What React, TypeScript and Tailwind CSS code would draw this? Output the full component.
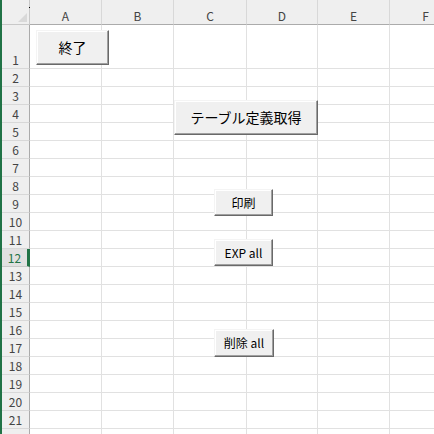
import React from 'react'

const cols = ['A', 'B', 'C', 'D', 'E', 'F']
const rows = Array.from({ length: 22 }, (_, i) => i + 1)

const font = { fontFamily: '"Noto Sans CJK JP", "Noto Sans", sans-serif' }

function XlButton({ label, className }: { label: string; className: string }) {
  return (
    <div
      className={`absolute flex items-center justify-center border border-t-[#f4f4f4] border-l-[#f4f4f4] border-r-[#696969] border-b-[#696969] bg-[#f0f0f0] text-black shadow-[inset_-1px_-1px_0_#a0a0a0,inset_1px_1px_0_#ffffff] ${className}`}
    >
      {label}
    </div>
  )
}

export default function App() {
  return (
    <div className="relative h-[434px] w-[434px] overflow-hidden bg-white" style={font}>
      <div className="flex h-full">
        {/* green window edge */}
        <div className="h-full w-[2px] shrink-0 bg-[#217346]" />
        <div className="grid h-full grid-cols-[28px_72px_72px_73px_71px_72px_72px] grid-rows-[25px_44px_repeat(21,18px)]">
          {/* corner */}
          <div className="relative border-r border-b border-r-[#c8c8c8] border-b-[#c8c8c8] bg-[#efefef]">
            <div className="absolute left-[16px] top-[13px] h-0 w-0 border-l-[9px] border-b-[9px] border-l-transparent border-b-[#d9d9d9]" />
            <div className="absolute left-[27px] top-[7px] h-px w-px bg-black" />
          </div>
          {cols.map((c) => (
            <div
              key={c}
              className="flex items-end justify-center border-r border-b border-r-[#d8d8d8] border-b-[#ababab] bg-[#efefef] pb-[1px] text-[12px] leading-none text-[#444]"
            >
              <span className="pb-[1px]">{c}</span>
            </div>
          ))}
          {rows.map((r) => (
            <React.Fragment key={r}>
              <div
                className={`flex items-end justify-center border-b text-[12px] leading-none ${
                  r === 12
                    ? 'border-r-[3px] border-r-[#217346] border-b-[#c8c8c8] bg-[#e1e1e1] text-[#217346]'
                    : 'border-r border-r-[#ababab] border-b-[#d8d8d8] bg-[#efefef] text-[#444]'
                }`}
              >
                {r < 22 && <span className="pb-[2px]">{r}</span>}
              </div>
              {cols.map((c) => (
                <div key={c} className="border-r border-b border-[#e1e1e1]" />
              ))}
            </React.Fragment>
          ))}
        </div>
      </div>

      <XlButton label="終了" className="left-[36px] top-[30px] h-[35px] w-[73px] text-[14px]" />
      <XlButton label="テーブル定義取得" className="left-[174px] top-[100px] h-[35px] w-[144px] text-[14px]" />
      <XlButton label="印刷" className="left-[214px] top-[189px] h-[27px] w-[59px] text-[12px]" />
      <XlButton label="EXP all" className="left-[214px] top-[239px] h-[27px] w-[59px] text-[12px]" />
      <XlButton label="削除 all" className="left-[214px] top-[329px] h-[28px] w-[60px] text-[12px]" />
    </div>
  )
}
